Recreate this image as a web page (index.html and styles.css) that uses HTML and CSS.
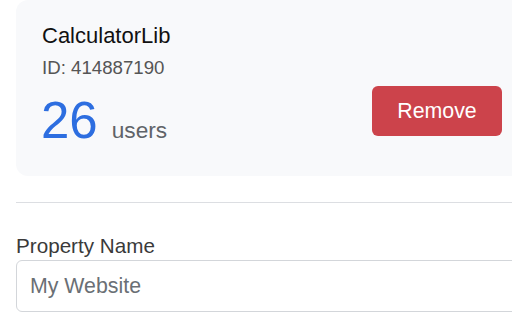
FILE: index.html
```html
<!DOCTYPE html>
<html>
<head>
<meta charset="utf-8">
<link rel="stylesheet" href="styles.css">
</head>
<body>
<div class="page">
  <div class="card">
    <div class="title">CalculatorLib</div>
    <div class="id">ID: 414887190</div>
    <div class="stats">
      <div class="count">
        <span class="num">26</span>
        <span class="unit">users</span>
      </div>
      <button class="remove">Remove</button>
    </div>
  </div>
  <hr class="divider">
  <label class="label" for="pname">Property Name</label>
  <input class="field" id="pname" type="text" placeholder="My Website">
</div>
</body>
</html>
```
FILE: styles.css
```css
html, body {
  margin: 0;
  padding: 0;
  overflow: hidden;
  background: #ffffff;
}
body {
  font-family: "Liberation Sans", Arial, sans-serif;
  width: 512px;
  height: 320px;
}
.page {
  width: 512px;
  padding-left: 16px;
}
.card {
  box-sizing: border-box;
  width: 512px;
  background: #f8f9fb;
  border-radius: 12px;
  padding: 23px 26px 26px 26px;
}
.title {
  font-size: 22px;
  line-height: 26px;
  color: #111111;
}
.id {
  margin-top: 8px;
  font-size: 18.67px;
  line-height: 22px;
  color: #555555;
}
.stats {
  margin-top: 7px;
  display: flex;
  justify-content: space-between;
  align-items: flex-start;
}
.count {
  display: flex;
  align-items: baseline;
  gap: 14px;
  margin-top: 5px;
  margin-left: -1px;
}
.num {
  font-size: 51px;
  line-height: 59px;
  color: #2d6ee0;
}
.unit {
  font-size: 22.67px;
  line-height: 26px;
  color: #5f6368;
}
.remove {
  box-sizing: border-box;
  width: 130px;
  height: 50px;
  border: none;
  border-radius: 6px;
  background: #cc434b;
  color: #ffffff;
  font-family: "Liberation Sans", Arial, sans-serif;
  font-size: 21.33px;
  padding: 0;
  cursor: pointer;
}
.divider {
  box-sizing: border-box;
  width: 512px;
  margin: 26px 0 0 0;
  border: none;
  border-top: 1px solid #dcdee2;
  height: 0;
}
.label {
  display: block;
  margin-top: 30px;
  font-size: 20.67px;
  line-height: 26px;
  color: #3a3a3a;
}
.field {
  display: block;
  box-sizing: border-box;
  width: 512px;
  height: 52px;
  margin-top: 1px;
  padding: 0 13px;
  border: 1px solid #d3d6da;
  border-radius: 6px;
  background: #ffffff;
  font-family: "Liberation Sans", Arial, sans-serif;
  font-size: 21.33px;
  color: #333333;
  outline: none;
}
.field::placeholder {
  color: #6a6f75;
  opacity: 1;
}
```
